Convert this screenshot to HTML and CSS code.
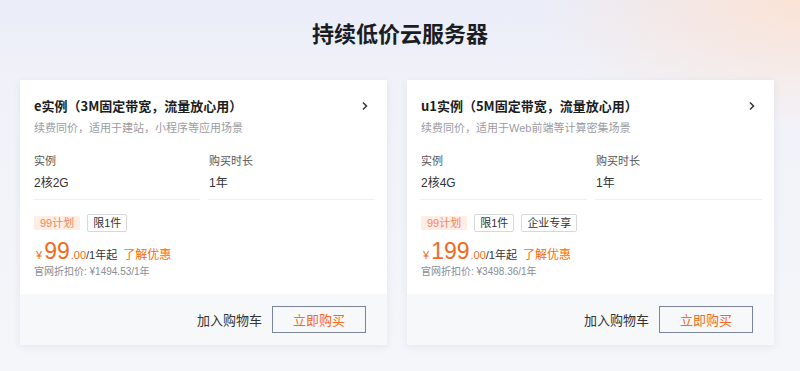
FILE: index.html
```html
<!DOCTYPE html>
<html lang="zh-CN">
<head>
<meta charset="utf-8">
<link rel="stylesheet" href="styles.css">
</head>
<body>
<div class="page">
  <h1 class="title">持续低价云服务器</h1>
  <div class="cards">
    <div class="card">
      <div class="card-body">
        <div class="card-head">
          <span class="card-title">e实例（3M固定带宽，流量放心用）</span>
          <svg class="chev" width="8" height="10" viewBox="0 0 8 10"><path d="M2 1.5 L5.5 5 L2 8.5" fill="none" stroke="#333" stroke-width="1.5"/></svg>
        </div>
        <div class="card-sub">续费同价，适用于建站，小程序等应用场景</div>
        <div class="specs">
          <div class="spec"><div class="spec-label">实例</div><div class="spec-val">2核2G</div></div>
          <div class="spec"><div class="spec-label">购买时长</div><div class="spec-val">1年</div></div>
        </div>
        <div class="tags">
          <span class="tag tag-hot">99计划</span>
          <span class="tag tag-line">限1件</span>
        </div>
        <div class="price">
          <span class="cur">¥</span><span class="num">99</span><span class="dec">.00</span><span class="unit">/1年起</span><a class="more">了解优惠</a>
        </div>
        <div class="orig">官网折扣价: ¥1494.53/1年</div>
      </div>
      <div class="card-foot">
        <span class="cart">加入购物车</span>
        <button class="buy">立即购买</button>
      </div>
    </div>
    <div class="card">
      <div class="card-body">
        <div class="card-head">
          <span class="card-title">u1实例（5M固定带宽，流量放心用）</span>
          <svg class="chev" width="8" height="10" viewBox="0 0 8 10"><path d="M2 1.5 L5.5 5 L2 8.5" fill="none" stroke="#333" stroke-width="1.5"/></svg>
        </div>
        <div class="card-sub">续费同价，适用于Web前端等计算密集场景</div>
        <div class="specs">
          <div class="spec"><div class="spec-label">实例</div><div class="spec-val">2核4G</div></div>
          <div class="spec"><div class="spec-label">购买时长</div><div class="spec-val">1年</div></div>
        </div>
        <div class="tags">
          <span class="tag tag-hot">99计划</span>
          <span class="tag tag-line">限1件</span>
          <span class="tag tag-line">企业专享</span>
        </div>
        <div class="price">
          <span class="cur">¥</span><span class="num">199</span><span class="dec">.00</span><span class="unit">/1年起</span><a class="more">了解优惠</a>
        </div>
        <div class="orig">官网折扣价: ¥3498.36/1年</div>
      </div>
      <div class="card-foot">
        <span class="cart">加入购物车</span>
        <button class="buy">立即购买</button>
      </div>
    </div>
  </div>
</div>
</body>
</html>
```
FILE: styles.css
```css
* { box-sizing: border-box; }
html, body { margin: 0; padding: 0; }
body {
  font-family: "Liberation Sans", "Noto Sans CJK SC", sans-serif;
  color: #333;
  width: 800px;
  height: 371px;
  overflow: hidden;
  background:
    radial-gradient(ellipse 260px 130px at 800px 0px, rgba(253, 226, 210, 0.9), rgba(253, 226, 210, 0) 100%),
    linear-gradient(180deg, #eaedf8 0px, #f1f2f9 90px, #f5f6fa 371px);
}
.page { padding-top: 17px; }
.title {
  margin: 0;
  text-align: center;
  font-size: 22px;
  line-height: 30px;
  font-weight: 700;
  color: #1b1d22;
  font-family: "Noto Sans CJK SC", sans-serif;
}
.cards {
  display: flex;
  gap: 20px;
  padding-left: 20px;
  margin-top: 33px;
}
.card {
  width: 367px;
  background: #fff;
  box-shadow: 0 2px 8px rgba(30, 40, 80, 0.07);
}
.card-body { padding: 16px 12px 15px 13px; }
.card-head {
  display: flex;
  justify-content: space-between;
  align-items: center;
  padding-left: 1px;
  padding-right: 6px;
}
.card-title {
  font-family: "Noto Sans CJK SC", sans-serif;
  font-size: 13px;
  line-height: 20px;
  font-weight: 700;
  color: #1b1d22;
}
.chev { display: block; }
.card-sub {
  margin-top: 4px;
  padding-left: 1px;
  font-size: 11px;
  line-height: 16px;
  color: #9a9ca3;
}
.specs {
  display: grid;
  grid-template-columns: 1fr 1fr;
  gap: 8px;
  margin-top: 17px;
}
.spec {
  border-bottom: 1px solid #eef0f3;
  padding: 0 0 7px 1px;
}
.spec-label { font-size: 11px; line-height: 16px; color: #555; }
.spec-val { margin-top: 5px; font-size: 12px; line-height: 18px; color: #333; }
.tags {
  display: flex;
  gap: 7px;
  align-items: center;
  margin-top: 14px;
  padding-left: 1px;
}
.tag {
  font-size: 11px;
  line-height: 14px;
  padding: 1px 5px;
  border-radius: 2px;
}
.tag-hot {
  background: #fdede5;
  color: #f2875c;
  padding: 0 6px;
  line-height: 14px;
}
.tag-line {
  border: 1px solid #d6d8dd;
  color: #333;
  background: #fff;
}
.price {
  margin-top: 6px;
  height: 26px;
  display: flex;
  align-items: baseline;
  padding-left: 3px;
  color: #f26b21;
}
.cur { font-size: 11px; margin-right: 2px; }
.num { font-size: 23px; line-height: 26px; }
.dec { font-size: 11px; margin-left: 1px; }
.unit { font-size: 11px; color: #333; }
.more { font-size: 12px; margin-left: 6px; color: #ff6a00; }
.orig {
  margin-top: 1px;
  padding-left: 1px;
  font-size: 10px;
  line-height: 14px;
  color: #8a8d93;
}
.card-foot {
  height: 51px;
  background: #f7f8fa;
  display: flex;
  justify-content: flex-end;
  align-items: center;
  gap: 10px;
  padding-right: 21px;
}
.cart { font-size: 13px; color: #333; }
.buy {
  width: 94px;
  height: 27px;
  border: 1px solid #7c849a;
  background: #f7f8fa;
  color: #f26b21;
  font-size: 13px;
  font-family: "Noto Sans CJK SC", sans-serif;
  border-radius: 0;
  padding: 0;
}
```
